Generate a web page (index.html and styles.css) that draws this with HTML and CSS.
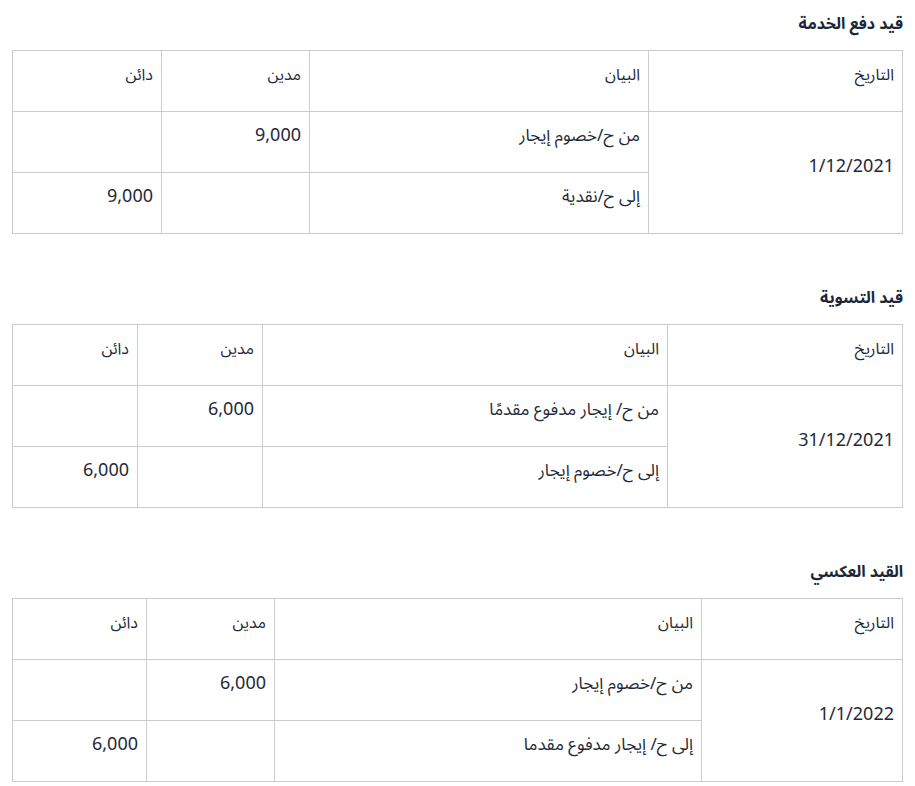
FILE: index.html
```html
<!DOCTYPE html>
<html lang="ar" dir="rtl">
<head>
<meta charset="utf-8">
<title>القيود</title>
<link rel="stylesheet" href="styles.css">
</head>
<body>
<main class="page">
  <section class="entry entry-pay">
    <h3 class="entry-title">قيد دفع الخدمة</h3>
    <table class="journal">
      <colgroup><col class="c-date"><col class="c-desc"><col class="c-debit"><col class="c-credit"></colgroup>
      <thead>
        <tr><th>التاريخ</th><th>البيان</th><th>مدين</th><th>دائن</th></tr>
      </thead>
      <tbody>
        <tr><td class="date" rowspan="2"><span class="num">1/12/2021</span></td><td>من ح/خصوم إيجار</td><td><span class="num">9,000</span></td><td></td></tr>
        <tr><td>إلى ح/نقدية</td><td></td><td><span class="num">9,000</span></td></tr>
      </tbody>
    </table>
  </section>

  <section class="entry entry-adjust">
    <h3 class="entry-title">قيد التسوية</h3>
    <table class="journal">
      <colgroup><col class="c-date"><col class="c-desc"><col class="c-debit"><col class="c-credit"></colgroup>
      <thead>
        <tr><th>التاريخ</th><th>البيان</th><th>مدين</th><th>دائن</th></tr>
      </thead>
      <tbody>
        <tr><td class="date" rowspan="2"><span class="num">31/12/2021</span></td><td>من ح/ إيجار مدفوع مقدمًا</td><td><span class="num">6,000</span></td><td></td></tr>
        <tr><td>إلى ح/خصوم إيجار</td><td></td><td><span class="num">6,000</span></td></tr>
      </tbody>
    </table>
  </section>

  <section class="entry entry-reverse">
    <h3 class="entry-title">القيد العكسي</h3>
    <table class="journal">
      <colgroup><col class="c-date"><col class="c-desc"><col class="c-debit"><col class="c-credit"></colgroup>
      <thead>
        <tr><th>التاريخ</th><th>البيان</th><th>مدين</th><th>دائن</th></tr>
      </thead>
      <tbody>
        <tr><td class="date" rowspan="2"><span class="num">1/1/2022</span></td><td>من ح/خصوم إيجار</td><td><span class="num">6,000</span></td><td></td></tr>
        <tr><td>إلى ح/ إيجار مدفوع مقدما</td><td></td><td><span class="num">6,000</span></td></tr>
      </tbody>
    </table>
  </section>
</main>
</body>
</html>
```
FILE: styles.css
```css
html, body {
  margin: 0;
  padding: 0;
  background: #ffffff;
}
body {
  font-family: "Noto Sans Arabic", "Noto Sans", "DejaVu Sans", sans-serif;
  color: #1e2a38;
  font-size: 16px;
}
.page {
  padding: 0 12px 0 13px;
}
.entry-title {
  margin: 0;
  padding-top: 12px;
  font-size: 16px;
  font-weight: 700;
  line-height: 24px;
  color: #1b2738;
}
.journal {
  width: 890px;
  margin-top: 14px;
  border-collapse: collapse;
  table-layout: fixed;
}
.journal th,
.journal td {
  border: 1px solid #cccccc;
  padding: 12px 8px 24px;
  text-align: right;
  vertical-align: top;
  font-weight: 400;
  line-height: 24px;
  height: 24px;
}
.journal td {
  font-size: 17px;
}
.journal .num {
  font-size: 18px;
  line-height: 16px;
}
.journal td.date {
  vertical-align: middle;
}
.entry-adjust {
  margin-top: 40px;
}
.entry-reverse {
  margin-top: 40px;
}
.entry-pay .c-date { width: 254px; }
.entry-pay .c-desc { width: 339px; }
.entry-pay .c-debit { width: 148px; }
.entry-pay .c-credit { width: 149px; }
.entry-adjust .c-date { width: 235px; }
.entry-adjust .c-desc { width: 405px; }
.entry-adjust .c-debit { width: 125px; }
.entry-adjust .c-credit { width: 125px; }
.entry-reverse .c-date { width: 201px; }
.entry-reverse .c-desc { width: 427px; }
.entry-reverse .c-debit { width: 128px; }
.entry-reverse .c-credit { width: 134px; }
```
